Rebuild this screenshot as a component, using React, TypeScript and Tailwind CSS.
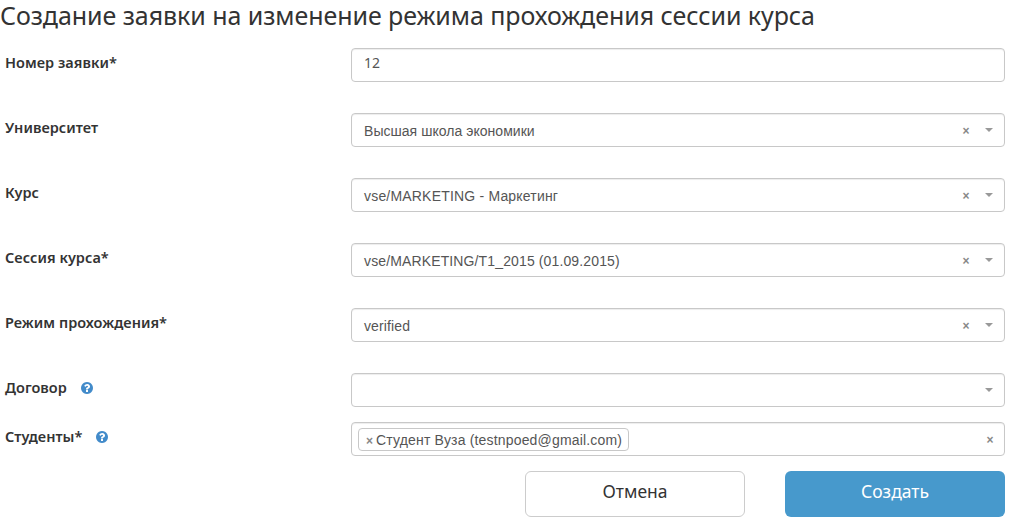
import type { ReactNode } from 'react';

const inputBox =
  "flex h-[34px] w-[654px] items-center rounded-[4px] border border-[#c8c8c8] bg-white shadow-[inset_0_1px_1px_rgba(0,0,0,0.075)] text-[14px] text-[#555555]";

function Caret() {
  return <span className="mr-[11px] mb-px h-0 w-0 border-x-4 border-t-4 border-x-transparent border-t-[#999999]" />;
}

function Clear({ className }: { className: string }) {
  return (
    <button className={`text-[12px] leading-none font-bold text-[#888888] ${className}`}>×</button>
  );
}

function HelpIcon() {
  return (
    <svg className="ml-[14px] h-3 w-3" viewBox="0 0 1536 1536" fill="#428bca">
      <path d="M896 1248v-192q0-14-9-23t-23-9H672q-14 0-23 9t-9 23v192q0 14 9 23t23 9h192q14 0 23-9t9-23zm256-672q0-88-55.500-163T958 297t-170-41q-243 0-371 213-15 24 8 42l132 100q7 6 19 6 16 0 25-12 53-68 86-92 34-24 86-24 48 0 85.500 26t37.500 59q0 38-20 61t-68 45q-63 28-115.500 86.500T640 892v36q0 14 9 23t23 9h192q14 0 23-9t9-23q0-19 21.500-49.500T972 829q32-18 49-28.500t46-35 44.500-48 28-60.500T1152 576zm384 192q0 209-103 385.500T1153.500 1433 768 1536t-385.500-103T103 1153.500 0 768t103-385.500T382.500 103 768 0t385.500 103T1433 382.500 1536 768z" />
    </svg>
  );
}

function Row({ label, help, compact, children }: {
  label: string;
  help?: boolean;
  compact?: boolean;
  children: ReactNode;
}) {
  return (
    <div className={`flex justify-between px-[5px] ${compact ? 'h-[49px]' : 'h-[65px]'}`}>
      <div className="flex h-[29px] items-center text-[14.500px] font-semibold tracking-[0.03px] whitespace-nowrap">
        <label>{label}</label>
        {help && <HelpIcon />}
      </div>
      {children}
    </div>
  );
}

function Select({ value, tracking = '' }: { value?: string; tracking?: string }) {
  return (
    <div className={`${inputBox} pl-3 font-['Liberation_Sans',sans-serif]`}>
      <span className={`mt-[3px] flex-1 ${tracking}`}>{value}</span>
      {value && <Clear className="mt-[2px] mr-[15.500px]" />}
      <Caret />
    </div>
  );
}

export default function App() {
  return (
    <main className="h-[524px] w-[1010px] bg-white font-['Noto_Sans',sans-serif] text-[#333333]">
      <h1 className="h-12 text-[25px] leading-[30px] font-normal tracking-[-0.065px] whitespace-nowrap">
        Создание заявки на изменение режима прохождения сессии курса
      </h1>
      <Row label="Номер заявки*">
        <input className={`${inputBox} px-3 pb-[5px] outline-none`} defaultValue="12" />
      </Row>
      <Row label="Университет">
        <Select value="Высшая школа экономики" tracking="tracking-[0.04px]" />
      </Row>
      <Row label="Курс">
        <Select value="vse/MARKETING - Маркетинг" tracking="tracking-[0.19px]" />
      </Row>
      <Row label="Сессия курса*">
        <Select value="vse/MARKETING/T1_2015 (01.09.2015)" tracking="tracking-[0.13px]" />
      </Row>
      <Row label="Режим прохождения*">
        <Select value="verified" tracking="tracking-[0.12px]" />
      </Row>
      <Row label="Договор" help compact>
        <Select />
      </Row>
      <Row label="Студенты*" help compact>
        <div className={`${inputBox} justify-between pl-[6px] font-['Liberation_Sans',sans-serif]`}>
          <span className="flex h-[23px] w-[271px] items-center rounded-[4px] border border-[#c8c8c8] pt-[2px] pl-[7px] whitespace-nowrap">
            <Clear className="mt-px mr-[3px]" />
            <span className="tracking-[0.17px]">Студент Вуза (testnpoed@gmail.com)</span>
          </span>
          <Clear className="mt-[2px] mr-[10.500px]" />
        </div>
      </Row>
      <div className="flex justify-end gap-10 pr-[5px] text-[17.500px]">
        <button className="h-[46px] w-[220px] rounded-[6px] border border-[#cccccc] bg-white pb-[5px]">Отмена</button>
        <button className="h-[46px] w-[220px] rounded-[6px] bg-[#4799cc] pb-[5px] text-white">Создать</button>
      </div>
    </main>
  );
}
